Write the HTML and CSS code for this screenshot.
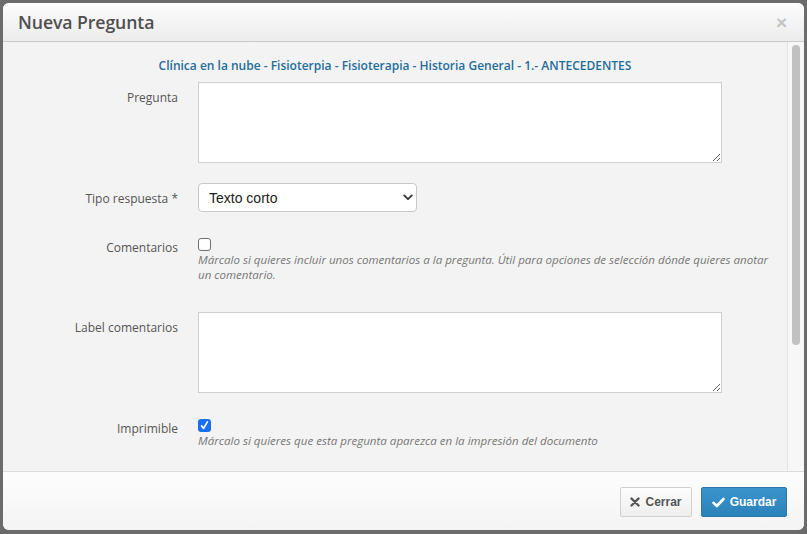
FILE: index.html
```html
<!DOCTYPE html>
<html lang="es">
<head>
<meta charset="utf-8">
<title>Nueva Pregunta</title>
<link rel="stylesheet" href="styles.css">
</head>
<body>
<div class="page">
  <div class="modal">
    <div class="modal-header">
      <h4 class="modal-title">Nueva Pregunta</h4>
      <span class="close">×</span>
    </div>
    <div class="modal-body">
      <form class="form">
        <h5 class="context">Clínica en la nube - Fisioterpia - Fisioterapia - Historia General - 1.- ANTECEDENTES</h5>
        <div class="row">
          <label class="control-label">Pregunta</label>
          <div class="control"><textarea class="textarea"></textarea></div>
        </div>
        <div class="row">
          <label class="control-label">Tipo respuesta *</label>
          <div class="control">
            <div class="select-wrap">
              <select class="select"><option>Texto corto</option></select>
              <svg class="chev" width="10" height="7" viewBox="0 0 10 7"><path d="M1.2 1.4 L5 5.2 L8.8 1.4" fill="none" stroke="#333" stroke-width="1.8" stroke-linecap="round" stroke-linejoin="round"/></svg>
            </div>
          </div>
        </div>
        <div class="row">
          <label class="control-label">Comentarios</label>
          <div class="control check-control">
            <span class="cb"></span>
            <p class="help">Márcalo si quieres incluir unos comentarios a la pregunta. Útil para opciones de selección dónde quieres anotar un comentario.</p>
          </div>
        </div>
        <div class="row">
          <label class="control-label">Label comentarios</label>
          <div class="control"><textarea class="textarea"></textarea></div>
        </div>
        <div class="row">
          <label class="control-label">Imprimible</label>
          <div class="control check-control">
            <span class="cb checked"><svg width="13" height="13" viewBox="0 0 13 13"><path d="M3.6 6.9 L5.6 9.4 L9.4 2.9" fill="none" stroke="#fff" stroke-width="1.7" stroke-linecap="round" stroke-linejoin="round"/></svg></span>
            <p class="help">Márcalo si quieres que esta pregunta aparezca en la impresión del documento</p>
          </div>
        </div>
      </form>
      <div class="scrollbar"><div class="thumb"></div></div>
    </div>
    <div class="modal-footer">
      <button class="btn btn-default" type="button">
        <svg width="10" height="10" viewBox="0 0 10 10"><path d="M1.5 1.5 L8.5 8.5 M8.5 1.5 L1.5 8.5" stroke="#555" stroke-width="2.4" stroke-linecap="round"/></svg>
        Cerrar
      </button>
      <button class="btn btn-primary" type="button">
        <svg width="13" height="11" viewBox="0 0 13 11"><path d="M1.5 5.8 L4.8 9 L11.5 2" fill="none" stroke="#fff" stroke-width="2.6" stroke-linecap="round" stroke-linejoin="round"/></svg>
        Guardar
      </button>
    </div>
  </div>
</div>
</body>
</html>
```
FILE: styles.css
```css
* { box-sizing: border-box; }
html, body { margin: 0; padding: 0; }
body {
  background: #6b6b6b;
  font-family: "Open Sans", "DejaVu Sans", sans-serif;
  font-size: 12px;
  color: #555;
}
.page {
  padding: 3px 3px 4px 3px;
  height: 534px;
}
.modal {
  height: 527px;
  background: #f3f3f3;
  border-radius: 6px;
  display: flex;
  flex-direction: column;
  overflow: hidden;
}
.modal-header {
  height: 39px;
  flex: none;
  display: flex;
  align-items: center;
  justify-content: space-between;
  padding: 0 17px 0 15px;
  background: linear-gradient(#fcfcfc, #ececec);
  border-bottom: 1px solid #c9c9c9;
}
.modal-title {
  margin: 0;
  font-size: 17.7px;
  font-weight: 600;
  color: #505050;
  letter-spacing: -0.1px;
}
.close {
  font-family: "Liberation Sans", Arial, sans-serif;
  font-size: 19px;
  font-weight: bold;
  color: #c4c4c4;
  line-height: 1;
  margin-top: 1px;
}
.modal-body {
  flex: 1;
  display: flex;
  overflow: hidden;
  background: #f3f3f3;
}
.form {
  flex: 1;
  padding: 15px 0 20px 0;
}
.scrollbar {
  flex: none;
  width: 17px;
  background: #f7f7f7;
  border-left: 1px solid #e3e3e3;
  padding: 3px 4px 0 4px;
}
.thumb {
  height: 300px;
  width: 8px;
  border-radius: 4px;
  background: #c1c1c1;
}
.context {
  margin: 0 0 7px 0;
  text-align: center;
  font-size: 12px;
  font-weight: 600;
  line-height: 18px;
  color: #236d9a;
}
.row {
  display: grid;
  grid-template-columns: 175px 577px;
  column-gap: 20px;
  margin-bottom: 20px;
}
.control-label {
  text-align: right;
  padding-top: 7px;
  line-height: 18px;
  color: #555;
}
.textarea {
  display: block;
  width: 524px;
  height: 81px;
  border: 1px solid #cfcfcf;
  background: #fff;
  border-radius: 0;
  margin: 0;
  font-family: inherit;
}
.select-wrap {
  position: relative;
  width: 219px;
}
.select {
  display: block;
  width: 219px;
  height: 29px;
  border: 1px solid #c8c8c8;
  border-radius: 4px;
  background: #fff;
  appearance: none;
  -webkit-appearance: none;
  padding: 0 10px;
  font-family: "Liberation Sans", Arial, sans-serif;
  font-size: 14px;
  color: #222;
  margin: 0;
}
.chev {
  position: absolute;
  right: 4px;
  top: 11px;
}
.check-control {
  padding-top: 6px;
}
.cb {
  display: block;
  width: 13px;
  height: 13px;
  border: 1px solid #6f6f6f;
  border-radius: 3px;
  background: #fff;
}
.cb.checked {
  border: none;
  background: #1a6ff0;
}
.cb svg { display: block; }
.help {
  margin: 1px 0 10px 0;
  font-size: 11.55px;
  font-style: italic;
  line-height: 15px;
  color: #777;
}
.modal-footer {
  height: 59px;
  flex: none;
  display: flex;
  justify-content: flex-end;
  align-items: flex-start;
  gap: 9px;
  padding: 15px 17px 0 0;
  border-top: 1px solid #dcdcdc;
  background: linear-gradient(#fdfdfd, #f4f4f4);
}
.btn {
  height: 30px;
  display: flex;
  align-items: center;
  justify-content: center;
  gap: 5px;
  font-family: "Liberation Sans", Arial, sans-serif;
  font-size: 12px;
  font-weight: bold;
  border-radius: 2px;
  padding: 0;
  margin: 0;
}
.btn-default {
  width: 72px;
  color: #555;
  border: 1px solid #d0d0d0;
  background: linear-gradient(#fdfdfd, #eeeeee);
}
.btn-primary {
  width: 86px;
  color: #fff;
  border: 1px solid #2b77a6;
  background: linear-gradient(#3a94cc, #2b82b9);
}
```
